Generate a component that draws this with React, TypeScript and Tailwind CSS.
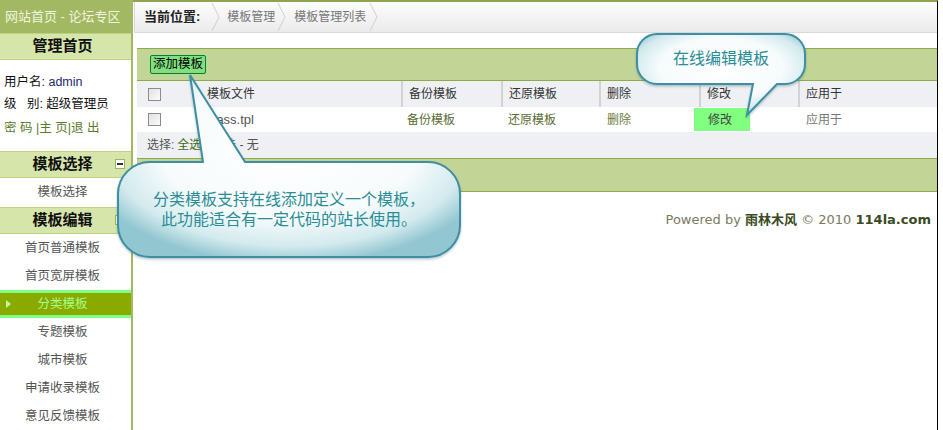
const FONT = "font-[family-name:'Liberation_Sans','Noto_Sans_CJK_SC',sans-serif]";

const EDIT_ITEMS = ["首页普通模板", "首页宽屏模板", "分类模板", "专题模板", "城市模板", "申请收录模板", "意见反馈模板"];
const ACTIVE = "分类模板";

function MinusBox() {
  return (
    <span className="flex h-[10px] w-[10px] items-center justify-center border border-[#9db35c] bg-white">
      <span className="h-[2px] w-[6px] bg-[#333]" />
    </span>
  );
}

function SideHeader({ title, toggle, tall }: { title: string; toggle?: boolean; tall?: boolean }) {
  return (
    <div
      className={`grid ${tall ? "h-[28px]" : "h-[27px]"} grid-cols-[1fr_auto_1fr] items-center border-y border-[#bfd184] bg-[#d6e5a9] pr-[6px]`}
    >
      <span />
      <span className="text-[15px] font-bold text-[#111]">{title}</span>
      <span className="flex justify-end">{toggle && <MinusBox />}</span>
    </div>
  );
}

function Chevron() {
  return (
    <svg width="9" height="30" viewBox="0 0 9 30" className="shrink-0">
      <path d="M1 1 L8 15 L1 29" fill="none" stroke="#cfcfcf" strokeWidth="1" />
    </svg>
  );
}

function Checkbox() {
  return <span className="block h-[13px] w-[13px] border border-[#8c8c8c] bg-gradient-to-br from-[#e2e2e2] to-[#fbfbfb]" />;
}

function Sidebar() {
  return (
    <aside className="flex w-[133px] shrink-0 flex-col border-r-2 border-[#a3b862] bg-white">
      <div className="flex h-[33px] items-center bg-[#a3b862] pl-[5px] text-[13px] text-[#f0f6de]">
        网站首页 - 论坛专区
      </div>
      <SideHeader title="管理首页" />
      <div className="flex h-[91px] flex-col pl-[4px] pt-[11px] text-[12.5px] leading-[22px] text-[#111]">
        <div>
          用户名: <span className="text-[#1c2a6e]">admin</span>
        </div>
        <div>级&nbsp;&nbsp;&nbsp;别: 超级管理员</div>
        <div className="mt-[2px] text-[#5c7a2c]">密&nbsp;码&nbsp;|主&nbsp;页|退&nbsp;出</div>
      </div>
      <SideHeader title="模板选择" toggle />
      <div className="flex h-[29px] items-center justify-center pr-[6px] text-[12.5px] text-[#555]">模板选择</div>
      <SideHeader title="模板编辑" toggle tall />
      {EDIT_ITEMS.map((item) =>
        item === ACTIVE ? (
          <div
            key={item}
            className="relative flex h-[28px] items-center justify-center border-y-[3px] border-[#80ff80] bg-[#8aaa00] pr-[6px] text-[12.5px] text-[#a4ff86]"
          >
            <svg width="5" height="8" viewBox="0 0 5 8" className="absolute left-[6px] top-[7px]">
              <path d="M0 0 L5 4 L0 8 Z" fill="#b8ff9a" />
            </svg>
            {item}
          </div>
        ) : (
          <div key={item} className="flex h-[28px] items-center justify-center pr-[6px] text-[12.5px] text-[#555]">
            {item}
          </div>
        )
      )}
    </aside>
  );
}

const COLS = "grid grid-cols-[62px_202px_100px_98px_100px_99px_1fr]";

function MainPanel() {
  return (
    <main className="flex w-[805px] shrink-0 flex-col border-r border-black border-t-2 border-t-[#8ea44f]">
      {/* breadcrumb */}
      <div className="ml-[1px] flex h-[31px] items-center border-b border-l border-[#d9d9d9] bg-gradient-to-b from-[#fdfdfd] to-[#ebebeb] pl-[9px]">
        <span className="text-[13px] font-bold text-[#222]">当前位置:</span>
        <span className="ml-[11px]"><Chevron /></span>
        <span className="ml-[7px] text-[12px] text-[#777]">模板管理</span>
        <span className="ml-[2px]"><Chevron /></span>
        <span className="ml-[8px] text-[12px] text-[#777]">模板管理列表</span>
        <span className="ml-[3px]"><Chevron /></span>
      </div>

      <div className="ml-[4px] mt-[15px] flex flex-col">
        {/* toolbar */}
        <div className="flex h-[33px] items-center border-y border-[#8eaa4c] bg-[#c2d596] pl-[12px]">
          <span className="rounded-[3px] bg-[#95ea95] p-[1px]">
            <span className="flex h-[19px] items-center rounded-[2px] border border-[#2f6a2f] bg-[#7fe07f] px-[2px] text-[12.5px] text-black">
              添加模板
            </span>
          </span>
        </div>

        {/* table head */}
        <div className={`${COLS} h-[26px] items-stretch bg-[#eff0f3] text-[12px] text-[#333]`}>
          <div className="flex items-center pl-[11px]"><Checkbox /></div>
          <div className="flex items-center pl-[8px]">模板文件</div>
          {["备份模板", "还原模板", "删除", "修改", "应用于"].map((h) => (
            <div key={h} className="flex items-center border-l-2 border-[#d2d2d2] pl-[6px]">{h}</div>
          ))}
        </div>

        {/* table row */}
        <div className={`${COLS} h-[25px] items-center bg-white text-[12px]`}>
          <div className="flex items-center pl-[11px]"><Checkbox /></div>
          <div className="pl-[8px] text-[13px] text-[#555]">class.tpl</div>
          <div className="pl-[6px] text-[#5b6b34]">备份模板</div>
          <div className="pl-[7px] text-[#5b6b34]">还原模板</div>
          <div className="pl-[8px] text-[#6b7a3a]">删除</div>
          <div className="flex">
            <span className="-ml-[5px] flex h-[23px] w-[56px] items-center bg-[#80ff80] pl-[14px] text-[#444]">修改</span>
          </div>
          <div className="pl-[8px] text-[#777]">应用于</div>
        </div>

        {/* select row */}
        <div className="flex h-[26px] items-center bg-[#eff0f3] pl-[10px] text-[12px] text-[#555]">
          选择: <span className="ml-[3px] text-[#3f6a16]">全选</span>&nbsp;-&nbsp;<span className="text-[#3f6a16]">反选</span>&nbsp;-&nbsp;无
        </div>

        <div className="h-[34px] border-y border-[#8eaa4c] bg-[#c2d596]" />

        <div className="mt-[18px] flex justify-end pr-[6px] font-[family-name:'DejaVu_Sans','Noto_Sans_CJK_SC',sans-serif] text-[13px] text-[#7a7a60]">
          Powered by&nbsp;<b className="text-[#3a4a22]">雨林木风</b>&nbsp;© 2010&nbsp;<b className="text-[#3a4a22]">114la.com</b>
        </div>
      </div>
    </main>
  );
}

function BubbleDefs({ id }: { id: string }) {
  return (
    <defs>
      <radialGradient id={id} cx="50%" cy="42%" r="62%">
        <stop offset="0" stopColor="#ffffff" />
        <stop offset="0.6" stopColor="#f6fbfc" />
        <stop offset="0.84" stopColor="#d3eaee" />
        <stop offset="1" stopColor="#92c6d0" />
      </radialGradient>
      <filter id={`${id}-s`} x="-10%" y="-10%" width="120%" height="130%">
        <feDropShadow dx="0" dy="1.5" stdDeviation="1.2" floodColor="#2c5f6b" floodOpacity="0.35" />
      </filter>
    </defs>
  );
}

function Callouts() {
  return (
    <>
      {/* small callout over the edit column */}
      <svg width="184" height="92" viewBox="0 0 184 92" className="absolute left-[630px] top-[28px]">
        <BubbleDefs id="cb1" />
        <path
          d="M27 6 H155 A20 20 0 0 1 175 26 V36 A20 20 0 0 1 155 56 H147 L117 87 L123 56 H27 A20 20 0 0 1 7 36 V26 A20 20 0 0 1 27 6 Z"
          fill="url(#cb1)"
          stroke="#3f8ea3"
          strokeWidth="2"
          filter="url(#cb1-s)"
        />
      </svg>
      <div className="absolute left-[637px] top-[34px] flex h-[50px] w-[168px] items-center justify-center text-[16px] text-[#2b8d96]">
        在线编辑模板
      </div>

      {/* large callout under the add button */}
      <svg width="360" height="195" viewBox="0 0 360 195" className="absolute left-[110px] top-[70px]">
        <BubbleDefs id="cb2" />
        <path
          d="M40 92 H93 L80 5 L135 92 H318 A32 32 0 0 1 350 124 V155 A32 32 0 0 1 318 187 H40 A32 32 0 0 1 8 155 V124 A32 32 0 0 1 40 92 Z"
          fill="url(#cb2)"
          stroke="#3f8ea3"
          strokeWidth="2"
          filter="url(#cb2-s)"
        />
      </svg>
      <div className="absolute left-[118px] top-[162px] flex h-[95px] w-[342px] flex-col items-center justify-center text-[16px] leading-[20px] text-[#2b8d96]">
        <span>分类模板支持在线添加定义一个模板，</span>
        <span>此功能适合有一定代码的站长使用。</span>
      </div>
    </>
  );
}

export default function App() {
  return (
    <div className={`relative flex h-[430px] w-[943px] overflow-hidden bg-white ${FONT}`}>
      <Sidebar />
      <MainPanel />
      <Callouts />
    </div>
  );
}
